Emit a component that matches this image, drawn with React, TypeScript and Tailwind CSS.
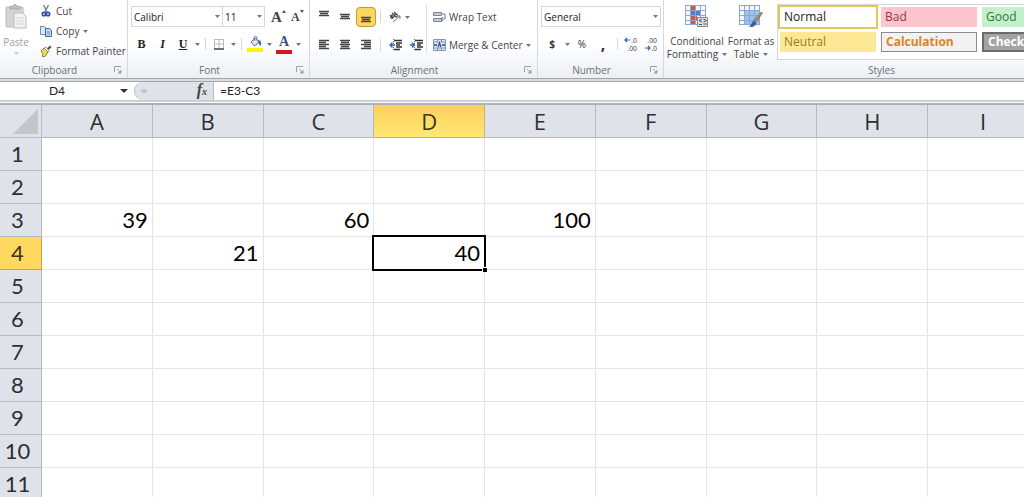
import type { ReactNode } from "react";

const columns = ["A", "B", "C", "D", "E", "F", "G", "H", "I"];
const rows = [1, 2, 3, 4, 5, 6, 7, 8, 9, 10, 11];

const cells: Record<string, string> = {
	A3: "39",
	C3: "60",
	E3: "100",
	B4: "21",
	D4: "40",
};

const styles = [
	{ name: "Normal", className: "bg-white text-[#222] outline-2 outline-[#e3c75e]" },
	{ name: "Bad", className: "bg-[#fdc6cf] text-[#9c3440]" },
	{ name: "Good", className: "bg-[#c4efcd] text-[#2d7a35]" },
	{ name: "Neutral", className: "bg-[#fde995] text-[#9c7a22]" },
	{
		name: "Calculation",
		className: "bg-[#f2f2f2] text-[#e08227] font-bold border border-[#8c8c8c]",
	},
	{
		name: "Check",
		className: "bg-[#a3a3a3] text-white font-bold border-2 border-[#6b6b6b]",
	},
];

const Arrow = () => (
	<svg className="w-[5px] h-[3px] shrink-0" viewBox="0 0 5 3">
		<path d="M0 0h5L2.5 3z" fill="#777" />
	</svg>
);

const ArrowButton = ({ label }: { label: string }) => (
	<button
		aria-label={label}
		className="flex items-center justify-center w-[9px] h-5">
		<Arrow />
	</button>
);

const IconButton = ({
	label,
	active,
	children,
}: {
	label: string;
	active?: boolean;
	children: ReactNode;
}) => (
	<button
		aria-label={label}
		className={
			active
				? "flex items-center justify-center w-5 h-5 rounded-sm border border-[#c29b3a] bg-[#fdd65d]"
				: "flex items-center justify-center w-5 h-5"
		}>
		{children}
	</button>
);

const Separator = () => <div className="w-px h-3 mx-[3px] bg-[#d3d6da]" />;

const Group = ({
	title,
	launcher = true,
	className,
	children,
}: {
	title: string;
	launcher?: boolean;
	className: string;
	children: ReactNode;
}) => (
	<section
		aria-label={title}
		className={`flex flex-col border-r border-[#d5d8dc] ${className}`}>
		<div className="flex h-[62px]">{children}</div>
		<div className="flex items-center h-4">
			<p className="flex-1 text-center text-[#6b7079]">{title}</p>
			{launcher && (
				<button
					aria-label={`${title} settings`}
					className="flex justify-center w-[18px]">
					<svg className="w-2 h-2" viewBox="0 0 8 8" fill="none">
						<path d="M.5 6V.5H7" stroke="#9b9fa6" />
						<path d="M3 3l3 3" stroke="#9b9fa6" />
						<path d="M7.5 3.5v4h-4z" fill="#9b9fa6" />
					</svg>
				</button>
			)}
		</div>
	</section>
);

const Select = ({
	label,
	value,
	className,
}: {
	label: string;
	value: string;
	className: string;
}) => (
	<div className={`relative h-[21px] ${className}`}>
		<select
			aria-label={label}
			className="w-full h-full pl-0.5 pr-2 bg-white border border-[#d3d6da] appearance-none text-[#222]">
			<option>{value}</option>
		</select>
		<span className="absolute right-[3px] top-0 flex items-center h-full pointer-events-none">
			<Arrow />
		</span>
	</div>
);

const Lines = ({ d }: { d: string }) => (
	<svg className="w-3 h-4" viewBox="0 0 12 16" fill="none">
		<path d={d} stroke="#444" strokeWidth="1.3" />
	</svg>
);

const Indent = ({ flip }: { flip?: boolean }) => (
	<svg className="w-[13px] h-3" viewBox="0 0 13 12" fill="none">
		<path d="M5 1.5h8M7 4h6M7 6h4M7 8h6M5 10.5h6" stroke="#333" strokeWidth="1.4" />
		<path d="M4.5 0v12" stroke="#666" strokeDasharray="1 1" />
		<path
			d={flip ? "M0 6h4M2 3.5L4.5 6 2 8.5" : "M6 6H1M3.5 3.5L1 6l2.500 2.500"}
			stroke="#3e67a8"
			strokeWidth="1.4"
		/>
	</svg>
);

const Clipboard = () => (
	<Group title="Clipboard" className="w-32 shrink-0">
		<button
			disabled
			className="flex flex-col items-center w-8 pt-1 text-[#a0a0a0]">
			<svg className="w-6 h-[26px] shrink-0" viewBox="0 0 24 26">
				<rect x="2" y="3" width="17" height="20" rx="1" fill="#d4d4d4" stroke="#bbb" />
				<path d="M6 5V2.500h3a2 2 0 0 1 4 0h3V5z" fill="#c2c2c2" stroke="#aaa" />
				<path d="M10 9h9l3 3v12H10z" fill="#f2f2f2" stroke="#bdbdbd" />
				<path d="M12 14h8M12 17h8M12 20h8" stroke="#d5d5d5" />
			</svg>
			<span className="h-5 leading-6">Paste</span>
			<svg className="w-[5px] h-[3px] mt-0.5" viewBox="0 0 5 3">
				<path d="M0 0h5L2.500 3z" fill="#ccc" />
			</svg>
		</button>
		<div className="flex flex-col pl-2">
			<button className="flex items-center h-[21px] gap-1">
				<svg className="w-3 h-3" viewBox="0 0 12 12" fill="none">
					<path d="M3.500 0l3.500 7M8.500 0L5 7" stroke="#7287a8" strokeWidth="1.500" />
					<circle cx="4" cy="9" r="1.700" stroke="#2c559c" strokeWidth="1.700" />
					<circle cx="8" cy="9" r="1.700" stroke="#2c559c" strokeWidth="1.700" />
				</svg>
				Cut
			</button>
			<button className="flex items-center h-5 gap-1">
				<svg className="w-3 h-3" viewBox="0 0 12 12">
					<path d="M.5 1.500h4l2 2v6h-6z" fill="#dbe8f8" stroke="#6a8fc2" />
					<path d="M5.500 3.500h4l2 2v6h-6z" fill="#c4d9f2" stroke="#3b67a9" />
					<path d="M7 7h3M7 9h3" stroke="#6a8fc2" />
				</svg>
				Copy
				<Arrow />
			</button>
			<button className="flex items-center h-5 gap-1 whitespace-nowrap">
				<svg className="w-3 h-3" viewBox="0 0 12 12">
					<path d="M1 6l3-3 4 4-3 4.500H2.500C3 9 2 7.500 1 6z" fill="#f1d95c" stroke="#8f8434" />
					<path d="M4 3l2-1 3 3.500-1 1.500z" fill="#fff" stroke="#777" strokeWidth=".7" />
					<path d="M7 3.500L10 .5l1.500 1.500-3 3z" fill="#465a38" />
				</svg>
				Format Painter
			</button>
		</div>
	</Group>
);

const Font = () => (
	<Group title="Font" className="w-[182px] shrink-0">
		<div className="flex flex-col gap-[7px] pt-1.5 pl-[3px]">
			<div className="flex items-center">
				<Select label="Font" value="Calibri" className="w-[92px]" />
				<Select label="Font size" value="11" className="w-[43px] -ml-px" />
				<button
					aria-label="Grow font"
					className="flex items-center w-5 ml-[6px] font-['Liberation_Serif',serif] text-[15px] leading-5 font-bold text-[#444]">
					A
					<svg className="w-1 h-3 self-start" viewBox="0 0 4 12">
						<path d="M0 6l2-3 2 3z" fill="#45577a" />
					</svg>
				</button>
				<button
					aria-label="Shrink font"
					className="flex items-center w-5 font-['Liberation_Serif',serif] text-xs leading-5 font-bold text-[#444]">
					A
					<svg className="w-1 h-3 self-start" viewBox="0 0 4 12">
						<path d="M0 3l2 3 2-3z" fill="#45577a" />
					</svg>
				</button>
			</div>
			<div className="flex items-center font-['Liberation_Serif',serif] text-xs text-[#222]">
				<button className="w-[21px] font-bold">B</button>
				<button className="w-[21px] font-bold italic">I</button>
				<button className="w-5 font-bold underline">U</button>
				<ArrowButton label="Underline style" />
				<Separator />
				<IconButton label="Borders">
					<svg className="w-3 h-3" viewBox="0 0 12 12" fill="none">
						<path d="M1.500 1v10M6 1v10M10.500 1v10M1 1.500h10M1 6h10" stroke="#bbb" />
						<path d="M1 11h10" stroke="#444" strokeWidth="1.500" />
					</svg>
				</IconButton>
				<ArrowButton label="Border style" />
				<Separator />
				<IconButton label="Fill color">
					<svg className="w-4 h-4" viewBox="0 0 16 16">
						<path d="M4 6l4-4 4 4.500-4.500 3.500z" fill="#dce5f0" stroke="#5d6f88" />
						<path d="M7 5V2a1.500 1.500 0 0 1 3 0v2" fill="none" stroke="#5d6f88" />
						<path d="M11 4c3 0 4 3 2.500 6-1-1-2.500-3-2.500-6z" fill="#42689f" />
						<path d="M0 12h16v4H0z" fill="#fbf500" />
					</svg>
				</IconButton>
				<ArrowButton label="Fill colors" />
				<button
					aria-label="Font color"
					className="w-4 h-5 mx-0.5 text-sm leading-4 font-bold text-[#3f517b] border-b-4 border-[#d8151c]">
					A
				</button>
				<ArrowButton label="Font colors" />
			</div>
		</div>
	</Group>
);

const Alignment = () => (
	<Group title="Alignment" className="w-[228px] shrink-0">
		<div className="flex flex-col gap-2 pt-[7px] pl-1">
			<div className="flex items-center gap-px">
				<IconButton label="Top align">
					<Lines d="M1 2.500h10M2 4.500h8M1 6.500h10" />
				</IconButton>
				<IconButton label="Middle align">
					<Lines d="M1 5.500h10M2 7.500h8M1 9.500h10" />
				</IconButton>
				<IconButton label="Bottom align" active>
					<Lines d="M1 8.500h10M2 10.500h8M1 12.500h10" />
				</IconButton>
				<Separator />
				<button
					aria-label="Orientation"
					className="flex items-center gap-1 h-5 pl-1">
					<svg className="w-3 h-3" viewBox="0 0 12 12" fill="none">
						<path d="M1 4l3 3M3 2l4 4M5 1l3 3" stroke="#444" strokeWidth="1.300" />
						<circle cx="3" cy="6" r="1.500" stroke="#444" />
						<circle cx="7" cy="4.500" r="1.500" stroke="#444" />
						<path d="M4 11l7-6M11 8V5H8" stroke="#777" />
					</svg>
					<Arrow />
				</button>
			</div>
			<div className="flex items-center gap-px">
				<IconButton label="Align left">
					<Lines d="M1 3.500h10M1 5.500h7M1 7.500h10M1 9.500h7M1 11.500h10" />
				</IconButton>
				<IconButton label="Center">
					<Lines d="M1 3.500h10M2 5.500h8M1 7.500h10M2 9.500h8M1 11.500h10" />
				</IconButton>
				<IconButton label="Align right">
					<Lines d="M1 3.500h10M4 5.500h7M1 7.500h10M4 9.500h7M1 11.500h10" />
				</IconButton>
				<Separator />
				<IconButton label="Decrease indent">
					<Indent />
				</IconButton>
				<IconButton label="Increase indent">
					<Indent flip />
				</IconButton>
			</div>
		</div>
		<div className="w-px h-[50px] mt-1 bg-[#dfe1e4]" />
		<div className="flex flex-col gap-2 pt-[7px] pl-1.5">
			<button className="flex items-center h-5 gap-[3px]">
				<svg className="w-[13px] h-3" viewBox="0 0 13 12" fill="none">
					<path d="M.5 1.500h8v3h-8zM.5 7.500h8v3h-8z" fill="#c6cad1" stroke="#80858e" />
					<path d="M8 3h4v5H8M10 6L8 8l2 2" stroke="#5b7cac" />
				</svg>
				Wrap Text
			</button>
			<button className="flex items-center h-5 gap-[3px]">
				<svg className="w-[13px] h-3" viewBox="0 0 13 12" fill="none">
					<path d="M.5.5h12v11H.5z" fill="#dce6f2" stroke="#8196b5" />
					<path d="M4.500 0v3M8.500 0v3M4.500 9v3M8.500 9v3M0 3h13M0 9h13" stroke="#8196b5" />
					<path d="M1 6h3M9 6h3M5 8l1.500-4L8 8" stroke="#2d4d80" strokeWidth="1.300" />
				</svg>
				Merge &amp; Center
				<Arrow />
			</button>
		</div>
	</Group>
);

const Decimals = ({ top, bottom, d }: { top: string; bottom: string; d: string }) => (
	<svg
		className="w-[14px] h-4 font-['Liberation_Sans',sans-serif] text-[7px] leading-none"
		viewBox="0 0 14 16">
		<text x="13" y="7" textAnchor="end" fill="#444">
			{top}
		</text>
		<text x="13" y="15" textAnchor="end" fill="#444">
			{bottom}
		</text>
		<path d={d} fill="none" stroke="#2f5fae" strokeWidth="1.200" />
	</svg>
);

const NumberGroup = () => (
	<Group title="Number" className="w-[126px] shrink-0">
		<div className="flex flex-col gap-[7px] pt-1.5 pl-[3px]">
			<Select label="Number format" value="General" className="w-[120px]" />
			<div className="flex items-center text-[#333]">
				<button className="w-[22px] font-bold">$</button>
				<ArrowButton label="Currency" />
				<button className="w-5">%</button>
				<button className="w-[22px] h-5 text-base leading-4 font-bold">,</button>
				<Separator />
				<IconButton label="Increase decimal">
					<Decimals top=".0" bottom=".00" d="M6 4H1M3 2L1 4l2 2" />
				</IconButton>
				<IconButton label="Decrease decimal">
					<Decimals top=".00" bottom=".0" d="M1 12h5M4 10l2 2-2 2" />
				</IconButton>
			</div>
		</div>
	</Group>
);

const Styles = () => (
	<Group title="Styles" launcher={false} className="grow shrink-0 basis-[436px]">
		<button className="flex flex-col items-center w-[60px] ml-[3px] pt-[5px] shrink-0">
			<svg className="w-6 h-6 mb-1.5 shrink-0" viewBox="0 0 24 24">
				<path d="M.5.5h20v19H.5z" fill="#f4f8fd" />
				<path d="M6 0h5v5H6zM6 15h5v5H6z" fill="#d9533e" />
				<path d="M6 5h9v5H6z" fill="#4f7fc4" />
				<path d="M6 10h6v5H6z" fill="#d9533e" />
				<path
					d="M.5 0v20M5.500 0v20M10.500 0v20M15.500 0v20M20.500 0v20M0 .5h21M0 5.500h21M0 10.500h21M0 15.500h21M0 19.500h21"
					stroke="#8ea9d2"
					fill="none"
				/>
				<path d="M12.500 12.500h10v9h-10z" fill="#dcdee2" stroke="#888" />
				<path d="M17 14l-3 1.500 3 1.500M18.500 14l3 1.500-3 1.500M14 19.500h3M18.500 19h3" stroke="#555" fill="none" />
			</svg>
			<span className="leading-[13px]">Conditional</span>
			<span className="flex items-center gap-1 leading-[13px]">
				Formatting <Arrow />
			</span>
		</button>
		<button className="flex flex-col items-center w-12 pt-[5px] shrink-0">
			<svg className="w-6 h-6 mb-1.5 shrink-0" viewBox="0 0 24 24">
				<path d="M.5.5h20v19H.5z" fill="#f4f8fd" />
				<path d="M5 5h16v15H5z" fill="#9cc2ee" />
				<path
					d="M.5 0v20M5.500 0v20M10.500 0v20M15.500 0v20M20.500 0v20M0 .5h21M0 5.500h21M0 10.500h21M0 15.500h21M0 19.500h21"
					stroke="#86a8d8"
					fill="none"
				/>
				<path d="M22 7l1.500 1-6 9-2.500-2z" fill="#a58e68" stroke="#6f6552" strokeWidth=".6" />
				<path d="M14.500 15.500l3 2.500c-1 4-5 4.500-8 3.500 3-1 3-4 5-6z" fill="#335f9e" />
			</svg>
			<span className="leading-[13px] whitespace-nowrap">Format as</span>
			<span className="flex items-center gap-1 leading-[13px]">
				Table <Arrow />
			</span>
		</button>
		<div className="grid flex-1 grid-cols-[96px_96px_96px] content-start gap-[5px] h-14 mt-1 ml-0.5 pt-0.5 pl-0.5 bg-white border border-[#d3d6da]">
			{styles.map((style) => (
				<button
					key={style.name}
					className={`flex items-center h-5 px-1 text-xs whitespace-nowrap overflow-hidden ${style.className}`}>
					{style.name}
				</button>
			))}
		</div>
	</Group>
);

const FormulaBar = () => (
	<div className="flex h-[18px] bg-white text-xs font-[Lato,sans-serif] text-[#222]">
		<div className="flex items-center w-[132px] pr-0.5">
			<input
				aria-label="Name box"
				defaultValue="D4"
				className="flex-1 min-w-0 pr-1 text-center"
			/>
			<button aria-label="Names" className="flex justify-center w-3">
				<svg className="w-2 h-1" viewBox="0 0 8 4">
					<path d="M0 0h8L4 4z" fill="#333" />
				</svg>
			</button>
		</div>
		<div className="flex items-center justify-between w-20 ml-0.5 pl-1.5 pr-1.5 rounded-l-full border-l border-r border-l-[#b9bdc3] border-r-[#b9bdc3] bg-[#dfe2e7]">
			<span className="w-1.5 h-1 rounded-full bg-[#c3c7cd]" />
			<button
				aria-label="Insert function"
				className="font-['Liberation_Serif',serif] text-base leading-4 font-bold italic text-[#444]">
				f<span className="text-[10px]">x</span>
			</button>
		</div>
		<input
			aria-label="Formula"
			defaultValue="=E3-C3"
			className="flex-1 min-w-0 pl-1.5"
		/>
	</div>
);

const Sheet = () => (
	<div className="flex-1 min-h-0 overflow-hidden">
		<table className="table-fixed border-separate border-spacing-0 w-[calc(100%+15px)] font-[Lato,sans-serif] text-[22px] leading-8">
			<thead className="font-['Open_Sans',sans-serif]">
				<tr className="h-[33px]">
					<th className="w-[42px] p-0 bg-[#dfe2e8] border-r border-b border-[#b5b9c0]">
						<svg className="w-[27px] h-[27px] ml-3" viewBox="0 0 27 27">
							<path d="M26 1v25H1z" fill="#c3c5c9" />
						</svg>
					</th>
					{columns.map((column) => (
						<th
							key={column}
							scope="col"
							className={
								column === "D"
									? "p-0 font-normal text-[#3a3420] bg-linear-to-b from-[#fdcf5c] to-[#fee874] border-r border-b border-[#c8b27a]"
									: "p-0 font-normal text-[#2c2f33] bg-[#dfe2e8] border-r border-b border-[#b5b9c0]"
							}>
							{column}
						</th>
					))}
				</tr>
			</thead>
			<tbody>
				{rows.map((row) => (
					<tr key={row} className="h-[33px]">
						<th
							scope="row"
							className={
								row === 4
									? "p-0 pr-1.5 font-normal text-[#3a3420] bg-[#ffd95f] border-r border-b border-[#c8a24a]"
									: "p-0 pr-1.5 font-normal text-[#2c2f33] bg-[#dfe2e8] border-r border-b border-[#b5b9c0]"
							}>
							{row}
						</th>
						{columns.map((column) => {
							const id = column + row;
							return (
								<td
									key={id}
									className="relative p-0 pr-1 text-right text-black border-r border-b border-[#e4e5e6]">
									{cells[id]}
									{id === "D4" && (
										<div className="absolute z-10 -inset-0.5 border-2 border-black">
											<div className="absolute -right-[3px] -bottom-[3px] w-[5px] h-[5px] bg-black border-t border-l border-white" />
										</div>
									)}
								</td>
							);
						})}
					</tr>
				))}
			</tbody>
		</table>
	</div>
);

const App = () => {
	return (
		<main className="flex flex-col h-screen overflow-hidden bg-white font-['Open_Sans',sans-serif] text-[10px] leading-4 text-[#444]">
			<header className="flex shrink-0 h-[78px] overflow-hidden bg-linear-to-b from-white from-55% to-[#eceff4]">
				<Clipboard />
				<Font />
				<Alignment />
				<NumberGroup />
				<Styles />
			</header>
			<div className="shrink-0 h-1 bg-[#d9dce0] border-t border-b border-[#a3a6ab]" />
			<FormulaBar />
			<div className="shrink-0 h-[5px] border-t-2 border-b-2 border-t-[#cfd0d1] border-b-[#adb0b4]" />
			<Sheet />
		</main>
	);
};

export default App;
